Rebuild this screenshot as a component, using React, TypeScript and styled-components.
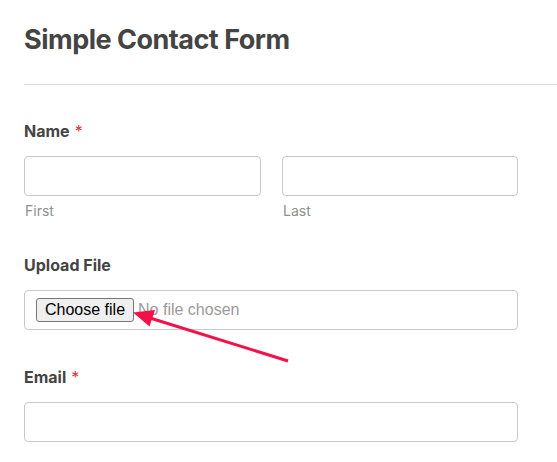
import React from "react";
import styled, { createGlobalStyle } from "styled-components";

const Global = createGlobalStyle`
  html, body { margin: 0; padding: 0; background: #fff; }
  body { font-family: Inter, "Noto Sans", sans-serif; color: #444; }
  * { box-sizing: border-box; }
`;

const Page = styled.div`
  position: relative;
  width: 557px;
  height: 462px;
  overflow: hidden;
  padding-left: 24px;
`;

const Header = styled.header`
  padding-top: 24px;
  border-bottom: 1px solid #dcdcdc;
  padding-bottom: 28px;
`;

const Title = styled.h1`
  margin: 0;
  font-family: Inter, sans-serif;
  font-weight: 700;
  font-size: 27px;
  line-height: 32px;
  letter-spacing: -0.5px;
  color: #444;
`;

const Form = styled.form`
  width: 494px;
`;

const Field = styled.div<{ $top: number }>`
  padding-top: ${(p) => p.$top}px;
`;

const Label = styled.label`
  display: block;
  font-family: Inter, sans-serif;
  font-weight: 700;
  font-size: 16px;
  line-height: 20px;
  color: #444;
  margin-bottom: 15px;
`;

const Required = styled.span`
  color: #d63637;
  font-weight: 400;
  margin-left: 5px;
`;

const Row = styled.div`
  display: grid;
  grid-template-columns: 237px 236px;
  column-gap: 21px;
`;

const Col = styled.div`
  display: flex;
  flex-direction: column;
`;

const TextInput = styled.input`
  display: block;
  width: 100%;
  height: 40px;
  margin: 0;
  border: 1px solid #c9c9c9;
  border-radius: 4px;
  background: #fff;
  padding: 0 10px;
  font-family: Inter, sans-serif;
  font-size: 16px;
  outline: none;
`;

const SubLabel = styled.span`
  display: block;
  margin-top: 6px;
  padding-left: 1px;
  font-family: Inter, sans-serif;
  font-size: 14px;
  line-height: 17px;
  color: #8f8f8f;
`;

const FileBox = styled.div`
  display: flex;
  align-items: center;
  height: 40px;
  border: 1px solid #c9c9c9;
  border-radius: 4px;
  padding-left: 11px;
  gap: 4px;
`;

const ChooseButton = styled.button`
  height: 24px;
  margin: 0;
  padding: 0 8px;
  border: 1px solid #767676;
  border-radius: 3px;
  background: #efefef;
  color: #000;
  font-family: "Liberation Sans", Arial, sans-serif;
  font-size: 16px;
  line-height: 22px;
`;

const NoFile = styled.span`
  font-family: "Liberation Sans", Arial, sans-serif;
  font-size: 16px;
  color: #9a9a9a;
`;

const ArrowLayer = styled.svg`
  position: absolute;
  left: 0;
  top: 0;
  pointer-events: none;
`;

export default function App() {
  return (
    <>
      <Global />
      <Page>
        <Header>
          <Title>Simple Contact Form</Title>
        </Header>
        <Form onSubmit={(e) => e.preventDefault()}>
          <Field $top={36}>
            <Label>
              Name<Required>*</Required>
            </Label>
            <Row>
              <Col>
                <TextInput type="text" />
                <SubLabel>First</SubLabel>
              </Col>
              <Col>
                <TextInput type="text" />
                <SubLabel>Last</SubLabel>
              </Col>
            </Row>
          </Field>
          <Field $top={36}>
            <Label>Upload File</Label>
            <FileBox>
              <ChooseButton type="button">Choose file</ChooseButton>
              <NoFile>No file chosen</NoFile>
            </FileBox>
          </Field>
          <Field $top={37}>
            <Label>
              Email<Required>*</Required>
            </Label>
            <TextInput type="email" />
          </Field>
        </Form>
        <ArrowLayer width="557" height="462" viewBox="0 0 557 462">
          <line x1="288" y1="361" x2="150" y2="318" stroke="#f31148" strokeWidth="3" />
          <polygon points="133,312.5 155,310 149.5,326.5" fill="#f31148" />
        </ArrowLayer>
      </Page>
    </>
  );
}
